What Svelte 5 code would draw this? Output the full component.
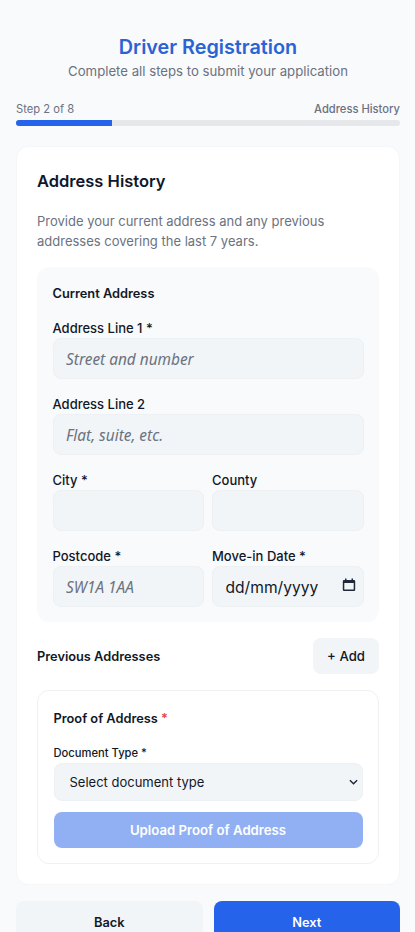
<script>
  const steps = 8;
  let step = 2;
  let docType = $state("");
  const progress = (step / steps) * 100;
</script>

<div class="page">
  <header class="head">
    <h1>Driver Registration</h1>
    <p>Complete all steps to submit your application</p>
  </header>

  <div class="progress">
    <div class="progress-labels">
      <span>Step {step} of {steps}</span>
      <span class="current">Address History</span>
    </div>
    <div class="track"><div class="fill" style="width: {progress}%"></div></div>
  </div>

  <main class="card">
    <h2>Address History</h2>
    <p class="intro">Provide your current address and any previous addresses covering the last 7 years.</p>

    <section class="panel">
      <h3>Current Address</h3>
      <div class="field">
        <label for="line1">Address Line 1 *</label>
        <input id="line1" type="text" placeholder="Street and number" />
      </div>
      <div class="field">
        <label for="line2">Address Line 2</label>
        <input id="line2" type="text" placeholder="Flat, suite, etc." />
      </div>
      <div class="cols">
        <div class="field">
          <label for="city">City *</label>
          <input id="city" type="text" />
        </div>
        <div class="field">
          <label for="county">County</label>
          <input id="county" type="text" />
        </div>
      </div>
      <div class="cols">
        <div class="field">
          <label for="postcode">Postcode *</label>
          <input id="postcode" type="text" placeholder="SW1A 1AA" />
        </div>
        <div class="field">
          <label for="movein">Move-in Date *</label>
          <div class="with-icon">
            <input id="movein" class="date" type="text" placeholder="dd/mm/yyyy" />
            <svg class="calendar" viewBox="0 0 14 14" width="14" height="14" aria-hidden="true">
              <path d="M3 0.5h1.5V2h5V0.5H11V2h1a1.2 1.2 0 0 1 1.2 1.2v8.6A1.2 1.2 0 0 1 12 13H2a1.2 1.2 0 0 1-1.2-1.2V3.2A1.2 1.2 0 0 1 2 2h1zM2.3 5v6.5h9.4V5z" fill="#1f2937" />
            </svg>
          </div>
        </div>
      </div>
    </section>

    <div class="previous">
      <h3>Previous Addresses</h3>
      <button class="add" type="button">+ Add</button>
    </div>

    <section class="proof">
      <h3>Proof of Address <span class="req">*</span></h3>
      <label class="small" for="doctype">Document Type *</label>
      <div class="with-icon">
        <select id="doctype" bind:value={docType}>
          <option value="">Select document type</option>
          <option value="utility">Utility bill</option>
          <option value="bank">Bank statement</option>
        </select>
        <svg class="chevron" viewBox="0 0 10 6" width="9" height="6" aria-hidden="true">
          <path d="M1 1l4 4 4-4" fill="none" stroke="#1f2937" stroke-width="1.6" />
        </svg>
      </div>
      <button class="upload" type="button" disabled>Upload Proof of Address</button>
    </section>
  </main>

  <div class="actions">
    <button class="back" type="button">Back</button>
    <button class="next" type="button">Next</button>
  </div>
</div>

<style>
  :global(body) {
    margin: 0;
    background: #f8fafc;
  }

  .page {
    box-sizing: border-box;
    padding: 35px 15px 16px 16px;
    font-family: Inter, "Liberation Sans", sans-serif;
    color: #111827;
  }

  .head {
    text-align: center;
    margin-bottom: 20px;
  }

  h1 {
    margin: 0;
    font-size: 19.8px;
    line-height: 24px;
    font-weight: 600;
    color: #2b63d4;
  }

  .head p {
    margin: 2px 0 0;
    font-size: 13.2px;
    line-height: 20px;
    color: #6b7280;
  }

  .progress-labels {
    display: flex;
    justify-content: space-between;
    font-size: 11.2px;
    line-height: 16px;
    color: #6b7280;
    margin-bottom: 3px;
  }

  .current {
    font-weight: 500;
  }

  .track {
    height: 6px;
    border-radius: 3px;
    background: #e5e7eb;
    overflow: hidden;
  }

  .fill {
    height: 100%;
    background: #2563eb;
  }

  .card {
    margin-top: 20px;
    padding: 20px;
    background: #fff;
    border: 1px solid #f4f6f8;
    border-radius: 12px;
  }

  h2 {
    margin: 0 0 16px;
    font-size: 16.5px;
    line-height: 28px;
    font-weight: 600;
    color: #0f172a;
  }

  .intro {
    margin: 0 0 16px;
    font-size: 13px;
    line-height: 20px;
    color: #6b7280;
  }

  .panel {
    padding: 17px 15.5px 15px;
    background: #f8fafc;
    border-radius: 12px;
    display: flex;
    flex-direction: column;
    gap: 15px;
  }

  .panel h3 {
    margin-bottom: -1px;
  }

  h3 {
    margin: 0;
    font-size: 12.8px;
    line-height: 20px;
    font-weight: 600;
    color: #111827;
  }

  .field {
    display: flex;
    flex-direction: column;
    min-width: 0;
    flex: 1 1 0;
  }

  label {
    font-size: 13px;
    line-height: 20px;
    font-weight: 500;
    color: #111827;
  }

  input,
  select {
    box-sizing: border-box;
    width: 100%;
    height: 41px;
    padding: 2px 12.5px 0;
    border: 1px solid #edf1f4;
    border-radius: 8px;
    background: #f1f5f8;
    font-family: inherit;
    font-size: 15.6px;
    color: #111827;
    outline: none;
  }

  input::placeholder {
    font-family: "Noto Sans", sans-serif;
    font-size: 15.4px;
    font-style: italic;
    color: #6b7280;
  }

  input.date::placeholder {
    font-family: Inter, sans-serif;
    font-size: 15.6px;
    font-style: normal;
    color: #111827;
  }

  .with-icon {
    position: relative;
  }

  .calendar {
    position: absolute;
    right: 8px;
    top: 12px;
  }

  .chevron {
    position: absolute;
    right: 4.5px;
    top: 16px;
  }

  .cols {
    display: flex;
    gap: 8px;
  }

  .previous {
    display: flex;
    justify-content: space-between;
    align-items: center;
    margin: 16px 0;
  }

  .previous h3 {
    margin-top: 2px;
  }

  .add {
    height: 36px;
    width: 66px;
    padding: 0;
    border: none;
    border-radius: 8px;
    background: #f1f5f8;
    font-family: inherit;
    font-size: 13.2px;
    font-weight: 500;
    color: #111827;
  }

  .proof {
    padding: 18px 15.5px 15px;
    border: 1px solid #eef1f4;
    border-radius: 12px;
    display: flex;
    flex-direction: column;
  }

  .proof h3 {
    margin-bottom: 16px;
  }

  .req {
    color: #dc4c4c;
  }

  .small {
    font-size: 11.2px;
    line-height: 16px;
    margin-bottom: 2px;
  }

  select {
    display: block;
    appearance: none;
    height: 38px;
    font-size: 13px;
    padding: 0 15px;
    margin-bottom: 11px;
  }

  .upload {
    height: 36px;
    border: none;
    border-radius: 8px;
    background: #2563eb;
    opacity: 0.5;
    color: #fff;
    font-family: inherit;
    font-size: 13.2px;
    font-weight: 600;
  }

  .actions {
    display: grid;
    grid-template-columns: 1fr 1fr;
    gap: 11px;
    margin-top: 16px;
  }

  .actions button {
    height: 42px;
    border: none;
    border-radius: 8px;
    font-family: inherit;
    font-size: 12.8px;
    font-weight: 600;
  }

  .back {
    background: #f1f5f8;
    color: #111827;
  }

  .next {
    background: #2563eb;
    color: #fff;
  }
</style>
